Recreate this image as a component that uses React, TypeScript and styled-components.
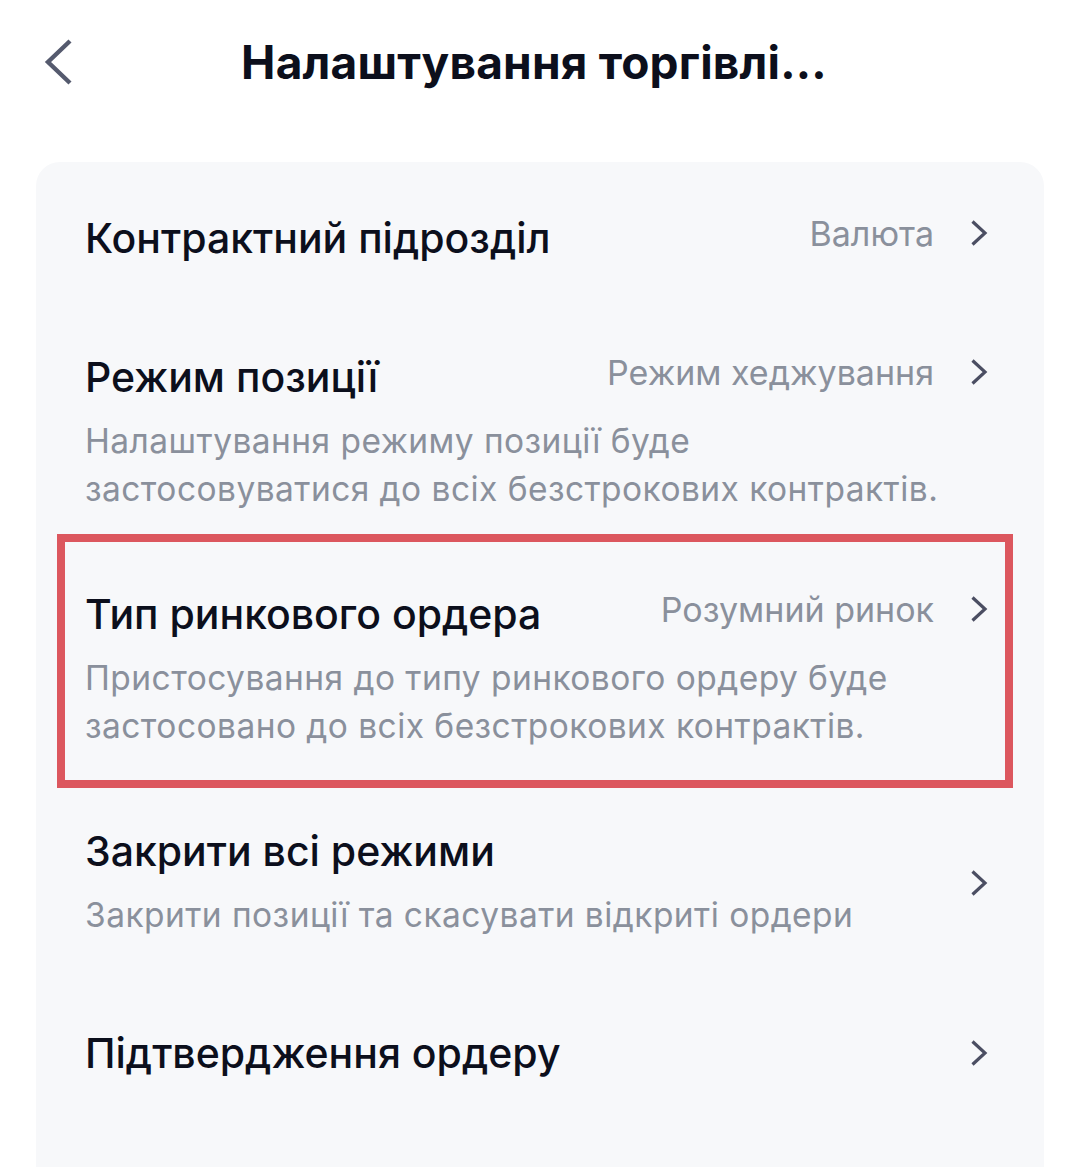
import React from "react";
import styled, { createGlobalStyle } from "styled-components";

const GlobalStyle = createGlobalStyle`
  html, body {
    margin: 0;
    padding: 0;
    background: #ffffff;
  }
  body {
    font-family: Inter, "Noto Sans", sans-serif;
    -webkit-font-smoothing: antialiased;
  }
`;

const Page = styled.div`
  width: 1080px;
  height: 1167px;
  overflow: hidden;
  background: #ffffff;
`;

const Header = styled.header`
  display: grid;
  grid-template-columns: 1fr auto 1fr;
  align-items: center;
  height: 124px;
  padding: 0 0 38px 0;
  box-sizing: content-box;
`;

const BackButton = styled.button`
  justify-self: start;
  display: flex;
  align-items: center;
  margin-left: 43px;
  padding: 0;
  border: none;
  background: none;
  color: #555a6e;
  cursor: pointer;
`;

const Title = styled.h1`
  margin: 0 12px 0 0;
  font-size: 46px;
  font-weight: 700;
  color: #0c0f1c;
  letter-spacing: 0.2px;
`;

const Card = styled.section`
  margin: 0 36px;
  background: #f7f8fa;
  border-radius: 24px 24px 0 0;
  min-height: 1005px;
`;

const Row = styled.div`
  position: relative;
  display: grid;
  grid-template-columns: 1fr auto;
  column-gap: 36px;
  align-content: center;
  box-sizing: border-box;
  min-height: 152px;
  padding: 38px 56px 38px 49px;
`;

const Main = styled.div`
  display: flex;
  flex-direction: column;
  min-width: 0;
`;

const TitleLine = styled.div`
  display: flex;
  align-items: center;
  justify-content: space-between;
  gap: 24px;
  height: 50px;
`;

const Label = styled.span`
  font-size: 41px;
  font-weight: 500;
  color: #0c0f1c;
  white-space: nowrap;
`;

const Value = styled.span`
  font-size: 34px;
  font-weight: 400;
  color: #8a909c;
  white-space: nowrap;
  margin-top: -9px;
`;

const Desc = styled.p`
  margin: 15px 0 0 0;
  font-size: 33.5px;
  letter-spacing: 0.45px;
  line-height: 48px;
  color: #8a909c;
  white-space: pre;
`;

const Side = styled.div<{ $top?: boolean }>`
  align-self: ${(p) => (p.$top ? "start" : "center")};
  display: flex;
  align-items: center;
  height: ${(p) => (p.$top ? "40px" : "auto")};
  color: #4b4e62;
`;

const Highlight = styled.div`
  position: absolute;
  top: -17px;
  bottom: 0;
  left: 21px;
  right: 31px;
  border: 8px solid #dc575e;
  pointer-events: none;
`;

const ChevronRight = () => (
  <svg width="18" height="28" viewBox="0 0 18 28" fill="none">
    <path
      d="M2.5 2.5 L15 14 L2.5 25.5"
      stroke="currentColor"
      strokeWidth="3.2"
      strokeLinecap="butt"
      strokeLinejoin="miter"
    />
  </svg>
);

const ChevronLeft = () => (
  <svg width="30" height="48" viewBox="0 0 30 48" fill="none">
    <path
      d="M27 3 L5 24 L27 45"
      stroke="currentColor"
      strokeWidth="4.4"
      strokeLinecap="butt"
      strokeLinejoin="miter"
    />
  </svg>
);

type Item = {
  label: string;
  value?: string;
  desc?: string;
  highlighted?: boolean;
};

const items: Item[] = [
  { label: "Контрактний підрозділ", value: "Валюта" },
  {
    label: "Режим позиції",
    value: "Режим хеджування",
    desc: "Налаштування режиму позиції буде\nзастосовуватися до всіх безстрокових контрактів.",
  },
  {
    label: "Тип ринкового ордера",
    value: "Розумний ринок",
    desc: "Пристосування до типу ринкового ордеру буде\nзастосовано до всіх безстрокових контрактів.",
    highlighted: true,
  },
  {
    label: "Закрити всі режими",
    desc: "Закрити позиції та скасувати відкриті ордери",
  },
  { label: "Підтвердження ордеру" },
];

export default function App() {
  return (
    <>
      <GlobalStyle />
      <Page>
        <Header>
          <BackButton aria-label="Назад">
            <ChevronLeft />
          </BackButton>
          <Title>Налаштування торгівлі...</Title>
          <span />
        </Header>
        <Card>
          {items.map((item) => (
            <Row key={item.label}>
              {item.highlighted && <Highlight />}
              <Main>
                <TitleLine>
                  <Label>{item.label}</Label>
                  {item.value && <Value>{item.value}</Value>}
                </TitleLine>
                {item.desc && <Desc>{item.desc}</Desc>}
              </Main>
              <Side $top={!!item.value}>
                <ChevronRight />
              </Side>
            </Row>
          ))}
        </Card>
      </Page>
    </>
  );
}
